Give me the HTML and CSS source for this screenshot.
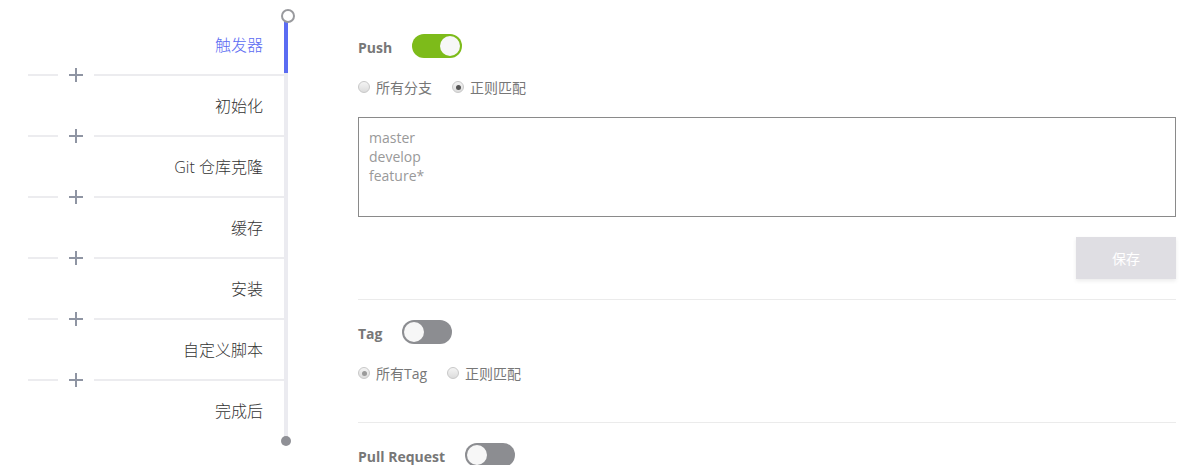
FILE: index.html
```html
<!DOCTYPE html>
<html lang="zh">
<head>
<meta charset="utf-8">
<title>Pipeline</title>
<link rel="stylesheet" href="styles.css">
</head>
<body>
<div class="page">
  <aside class="sidebar">
    <nav class="steps">
      <div class="step active">触发器</div>
      <div class="sep"><span class="seg short"></span><span class="plus"></span><span class="seg long"></span></div>
      <div class="step">初始化</div>
      <div class="sep"><span class="seg short"></span><span class="plus"></span><span class="seg long"></span></div>
      <div class="step">Git 仓库克隆</div>
      <div class="sep"><span class="seg short"></span><span class="plus"></span><span class="seg long"></span></div>
      <div class="step">缓存</div>
      <div class="sep"><span class="seg short"></span><span class="plus"></span><span class="seg long"></span></div>
      <div class="step">安装</div>
      <div class="sep"><span class="seg short"></span><span class="plus"></span><span class="seg long"></span></div>
      <div class="step">自定义脚本</div>
      <div class="sep"><span class="seg short"></span><span class="plus"></span><span class="seg long"></span></div>
      <div class="step">完成后</div>
    </nav>
    <div class="rail"><div class="rail-active"></div></div>
  </aside>

  <main class="main">
    <section class="block">
      <div class="toggle-row">
        <span class="label">Push</span>
        <span class="switch on"><span class="knob"></span></span>
      </div>
      <div class="radios">
        <label class="radio"><span class="dot"></span>所有分支</label>
        <label class="radio"><span class="dot checked"></span>正则匹配</label>
      </div>
      <textarea class="patterns" readonly>master
develop
feature*</textarea>
      <div class="actions"><button class="save">保存</button></div>
    </section>
    <hr class="divider">
    <section class="block">
      <div class="toggle-row">
        <span class="label">Tag</span>
        <span class="switch"><span class="knob"></span></span>
      </div>
      <div class="radios">
        <label class="radio"><span class="dot checked light"></span>所有Tag</label>
        <label class="radio"><span class="dot"></span>正则匹配</label>
      </div>
    </section>
    <hr class="divider tall">
    <section class="block">
      <div class="toggle-row">
        <span class="label">Pull Request</span>
        <span class="switch"><span class="knob"></span></span>
      </div>
    </section>
  </main>
</div>
</body>
</html>
```

FILE: styles.css
```css
* { box-sizing: border-box; }
html, body {
  margin: 0;
  padding: 0;
  background: #fff;
  height: 465px;
  overflow: hidden;
}
body {
  font-family: "Open Sans", "Noto Sans CJK SC", sans-serif;
  color: #444;
}
.page {
  display: flex;
  align-items: flex-start;
}

/* sidebar */
.sidebar {
  display: flex;
  width: 288px;
  flex: none;
  position: relative;
}
.steps {
  width: 284px;
  padding-top: 15px;
  display: flex;
  flex-direction: column;
}
.step {
  height: 59px;
  display: flex;
  align-items: center;
  justify-content: flex-end;
  padding-right: 21px;
  padding-bottom: 2px;
  font-size: 16px;
  font-weight: 300;
  color: #333;
}
.step.active { color: #5b6cf2; }
.sep {
  height: 2px;
  display: flex;
  align-items: center;
  padding-left: 28px;
}
.seg {
  height: 2px;
  background: #ececef;
}
.seg.short { width: 30px; }
.seg.long { flex: 1; }
.plus {
  width: 36px;
  height: 14px;
  margin: -6px 0;
  position: relative;
}
.plus::before, .plus::after {
  content: "";
  position: absolute;
  background: #8f95a3;
}
.plus::before { left: 11px; top: 6px; width: 14px; height: 1.5px; }
.plus::after { left: 17px; top: 0; width: 1.5px; height: 14px; }

.rail {
  width: 4px;
  margin-top: 18px;
  height: 420px;
  background: #ebebf0;
  position: relative;
}
.rail-active {
  height: 55px;
  background: #5b6cf2;
}
.rail::before {
  content: "";
  position: absolute;
  left: -3px;
  top: -9px;
  width: 10px;
  height: 10px;
  border: 2px solid #999a9e;
  border-radius: 50%;
  background: #fff;
}
.rail::after {
  content: "";
  position: absolute;
  left: -3px;
  bottom: -8px;
  width: 10px;
  height: 10px;
  border-radius: 50%;
  background: #8f9096;
}

/* main */
.main {
  margin-left: 70px;
  width: 818px;
  padding-top: 34px;
  flex: none;
}
.block { display: flex; flex-direction: column; }
.toggle-row {
  display: flex;
  align-items: center;
  gap: 20px;
  height: 24px;
}
.label {
  font-weight: 700;
  font-size: 14px;
  color: #777;
  position: relative;
  top: 1px;
}
.switch {
  width: 50px;
  height: 24px;
  border-radius: 12px;
  background: #8c8d91;
  display: flex;
  align-items: center;
  padding: 0 2px;
}
.switch.on {
  background: #7dbb1a;
  justify-content: flex-end;
}
.knob {
  width: 20px;
  height: 20px;
  border-radius: 50%;
  background: #f7f7f7;
}
.radios {
  display: flex;
  gap: 20px;
  margin-top: 19px;
  height: 20px;
  align-items: center;
}
.radio {
  display: flex;
  align-items: center;
  gap: 6px;
  font-size: 14px;
  color: #777;
}
.dot {
  width: 12px;
  height: 12px;
  border-radius: 50%;
  border: 1px solid #c8c8c8;
  background: linear-gradient(#f4f4f4, #dcdcdc);
  position: relative;
}
.dot.checked::after {
  content: "";
  position: absolute;
  left: 2.5px;
  top: 2.5px;
  width: 5px;
  height: 5px;
  border-radius: 50%;
  background: #555;
}
.dot.checked.light::after { background: #9a9a9a; }
.patterns {
  margin-top: 20px;
  height: 100px;
  width: 100%;
  border: 1px solid #8a8a8a;
  border-radius: 0;
  padding: 10px;
  font-family: "Open Sans", sans-serif;
  font-size: 14px;
  line-height: 19px;
  color: #999;
  resize: none;
  outline: none;
  display: block;
}
.actions {
  display: flex;
  justify-content: flex-end;
  margin-top: 20px;
}
.save {
  width: 100px;
  height: 42px;
  border: none;
  background: #dfdee3;
  color: #fff;
  font-family: "Noto Sans CJK SC", sans-serif;
  font-size: 14px;
  box-shadow: 0 2px 4px rgba(0, 0, 0, 0.08);
}
.divider {
  margin: 20px 0 0;
  border: none;
  height: 1px;
  background: #ebebeb;
}
.divider + .block { margin-top: 20px; }
.divider.tall { margin-top: 39px; }
```
